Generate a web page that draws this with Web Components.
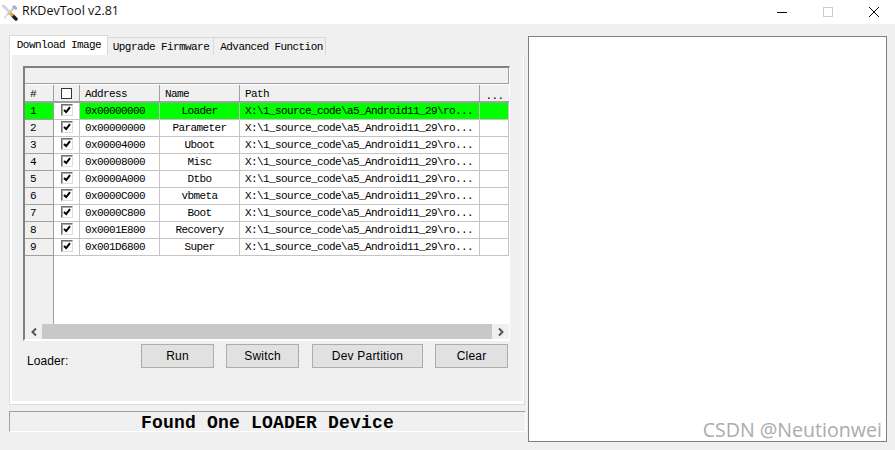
<!DOCTYPE html>
<html><head><meta charset="utf-8"><style>
html,body{margin:0;padding:0;background:#f0f0f0;overflow:hidden}
</style></head><body>
<app-window></app-window>
<script>
function def(name, css, html){
  customElements.define(name, class extends HTMLElement{
    connectedCallback(){
      if(this.shadowRoot) return;
      const r=this.attachShadow({mode:'open'});
      r.innerHTML='<style>'+css+'</style>'+(typeof html==='function'?html(this):html);
    }
  });
}
const BMP='"Liberation Mono","DejaVu Sans Mono",monospace';
def('title-bar',`
:host{display:flex;align-items:center;height:24px;background:#fff;font:13px "Open Sans","Liberation Sans",sans-serif;color:#000}
svg{display:block}
.icon{margin:0 0 0 2px;width:16px;height:17px}
.t{margin-left:4px;padding-bottom:3px;font-size:12.5px;flex:1;color:#111}
.c{display:flex;margin-right:-2px}
.b{width:46px;height:24px;display:flex;align-items:center;justify-content:center}
`,`<svg class="icon" viewBox="0 0 16 17">
<path d="M1.5 2 L9 9.5" stroke="#d2d6da" stroke-width="3" stroke-linecap="round"/>
<path d="M14 2 L5 11" stroke="#c9ccd0" stroke-width="2.4"/>
<path d="M11.5 1 L15.5 4 L14 6 L10 3Z" fill="#a8acb0"/>
<path d="M1.5 13 L6 9.5 L3.5 15.5Z" fill="#e2e2e2"/>
<path d="M10.5 11.5 L14 15" stroke="#1d1d1d" stroke-width="3.4" stroke-linecap="round"/>
<path d="M8 9 L11 12" stroke="#d9a92c" stroke-width="2.8"/>
</svg><span class="t">RKDevTool v2.81</span>
<div class="c">
<div class="b"><svg width="10" height="10"><path d="M0 5.5H10" stroke="#000"/></svg></div>
<div class="b"><svg width="10" height="10"><rect x=".5" y=".5" width="9" height="9" fill="none" stroke="#ccc"/></svg></div>
<div class="b"><svg width="10" height="10"><path d="M0 0L10 10M10 0L0 10" stroke="#000" stroke-width="1"/></svg></div>
</div>`);
def('tab-strip',`
:host{display:flex;height:20px;align-items:flex-end;font:11px ${BMP};letter-spacing:-.58px;color:#000}
.tab{height:18px;box-sizing:border-box;display:flex;align-items:center;justify-content:center;background:#f0f0f0;border:1px solid #d9d9d9;border-bottom:0;border-left:0;padding-top:1px}
.on{height:20px;background:#fff;border-left:1px solid #d9d9d9;width:99px;padding:0 0 1px 1px}
`,`<div class="tab on">Download Image</div><div class="tab" style="width:106px;padding-left:1px">Upgrade Firmware</div><div class="tab" style="width:112px;padding-left:4px">Advanced Function</div>`);
const rows=[['0x00000000','Loader'],['0x00000000','Parameter'],['0x00004000','Uboot'],['0x00008000','Misc'],['0x0000A000','Dtbo'],['0x0000C000','vbmeta'],['0x0000C800','Boot'],['0x0001E800','Recovery'],['0x001D6800','Super']];
def('grid-row',`
:host{display:grid;grid-template-columns:29px 26px 80px 80px 240px 29px;height:17px;font:11px ${BMP};letter-spacing:-.6px;color:#000}
:host([sel]) .c{background:#0f0}
.c{box-sizing:border-box;border-right:1px solid #c4c4c4;border-bottom:1px solid #c4c4c4;display:flex;align-items:center;padding-left:5px;white-space:pre;background:#fff;overflow:hidden}
.n{background:#f0f0f0!important;border-right:1px solid #a0a0a0;border-bottom:1px solid #a0a0a0;padding-left:5px}
:host([sel]) .n{background:#0f0!important}
.k{background:#fff!important;padding:0 0 2px;justify-content:center;border-bottom:1px solid #c4c4c4}
.m{justify-content:center;padding:0}
.box{width:12px;height:12px;box-sizing:border-box;border:1px solid #6f6f6f;border-right-color:#ddd;border-bottom-color:#ddd;box-shadow:inset 1px 1px 0 #a8a8a8;background:#fff}
.box svg{display:block}
`,h=>`<div class="c n">${h.getAttribute('num')}</div><div class="c k"><div class="box"><svg width="10" height="10" viewBox="0 0 10 10"><path d="M2 5L4.2 7L8 2.2" fill="none" stroke="#000" stroke-width="2"/></svg></div></div><div class="c">${h.getAttribute('addr')}</div><div class="c m">${h.getAttribute('name')}</div><div class="c">X:\\1_source_code\\a5_Android11_29\\ro...</div><div class="c"></div>`);
def('data-grid',`
:host{display:flex;flex-direction:column;box-sizing:border-box;width:487px;height:275px;margin-left:13px;border-top:2px solid #808080;border-left:2px solid #808080;border-right:1px solid #fff;border-bottom:2px solid #fff;font:11px ${BMP};letter-spacing:-.6px;color:#000;background:#fff}
.top{height:16px;flex:none;box-sizing:border-box;background:#f0f0f0;border-bottom:1px solid #a0a0a0;border-right:1px solid #a0a0a0}
.head{display:grid;flex:none;grid-template-columns:29px 26px 80px 80px 240px 29px;height:19px;box-sizing:border-box;background:#f0f0f0;border-top:1px solid #fff;border-bottom:2px solid #a0a0a0}
.head div{box-sizing:border-box;border-right:1px solid #a0a0a0;display:flex;align-items:center;padding-left:5px}
.body{flex:1;display:flex;flex-direction:column;min-height:0}
.side{flex:1;width:29px;box-sizing:border-box;background:#f0f0f0;border-right:1px solid #a0a0a0}
.sb{height:15px;display:flex;background:#f0f0f0;flex:none}
.sb .a{width:17px;display:flex;align-items:center;justify-content:center}
.sb .t{flex:1;background:#c8c8c8}
.bx{width:11px;height:11px;box-sizing:border-box;border:1px solid #333;background:#fff}
svg{display:block}
`,`<div class="top"></div><div class="head"><div>#</div><div style="padding:0;justify-content:center"><span class="bx"></span></div><div>Address</div><div>Name</div><div>Path</div><div style="justify-content:center;padding:5px 0 0;border:0">...</div></div>
<div class="body">${rows.map((r,i)=>`<grid-row num="${i+1}" addr="${r[0]}" name="${r[1]}"${i==0?' sel':''}></grid-row>`).join('')}<div class="side"></div></div>
<div class="sb"><div class="a"><svg width="8" height="10"><path d="M6 1.5L2.5 5L6 8.5" fill="none" stroke="#555" stroke-width="2"/></svg></div><div class="t"></div><div class="a"><svg width="8" height="10"><path d="M2 1.5L5.5 5L2 8.5" fill="none" stroke="#555" stroke-width="2"/></svg></div></div>`);
def('win-button',`
:host{display:flex;align-items:center;justify-content:center;box-sizing:border-box;height:24px;background:#e1e1e1;border:1px solid #adadad;font:12px "Liberation Sans",sans-serif;letter-spacing:.2px;color:#000;padding-bottom:1px}
`,`<slot></slot>`);
def('tab-panel',`
:host{display:flex;flex-direction:column;box-sizing:border-box;width:516px;height:350px;background:#f0f0f0;border:1px solid #dcdcdc;border-top:0;padding:11px 0 0 0;box-shadow:inset 2px 0 0 #fff,inset -1px 0 0 #fff,inset 0 -3px 0 #fff}
.row{display:flex;align-items:flex-start;margin-top:3px;padding-left:17px;font:12px "Liberation Sans",sans-serif;letter-spacing:.1px}
.l{width:114px;padding-top:10px}
`,`<data-grid></data-grid>
<div class="row"><span class="l">Loader:</span>
<win-button style="width:73px">Run</win-button>
<win-button style="width:73px;margin-left:12px">Switch</win-button>
<win-button style="width:111px;margin-left:13px">Dev Partition</win-button>
<win-button style="width:73px;margin-left:12px">Clear</win-button></div>`);
def('status-line',`
:host{display:block;box-sizing:border-box;width:517px;height:21px;margin-top:6px;border-top:1px solid #a0a0a0;border-left:1px solid #a0a0a0;border-right:1px solid #fff;border-bottom:1px solid #fff;text-align:center;font:bold 18px/23px ${BMP};letter-spacing:.2px;color:#000;overflow:hidden}
`,`<slot></slot>`);
def('app-window',`
:host{display:flex;flex-direction:column;width:895px;height:450px;background:#f0f0f0;position:relative}
.main{display:flex;flex:1;padding:11px 8px 0 9px;gap:2px}
.left{width:517px;flex:none}
.out{box-sizing:border-box;width:359px;height:406px;background:#fff;border:1px solid #808080;position:relative;margin-top:1px;display:block;flex:none}
.wm{position:absolute;right:4px;bottom:-2px;font:19.6px "Open Sans","Noto Sans",sans-serif;color:#aaacae;white-space:nowrap}
`,`<title-bar></title-bar><div class="main"><div class="left"><tab-strip></tab-strip><tab-panel></tab-panel><status-line>Found One LOADER Device</status-line></div><div class="out"><span class="wm">CSDN @Neutionwei</span></div></div>`);
</script></body></html>
